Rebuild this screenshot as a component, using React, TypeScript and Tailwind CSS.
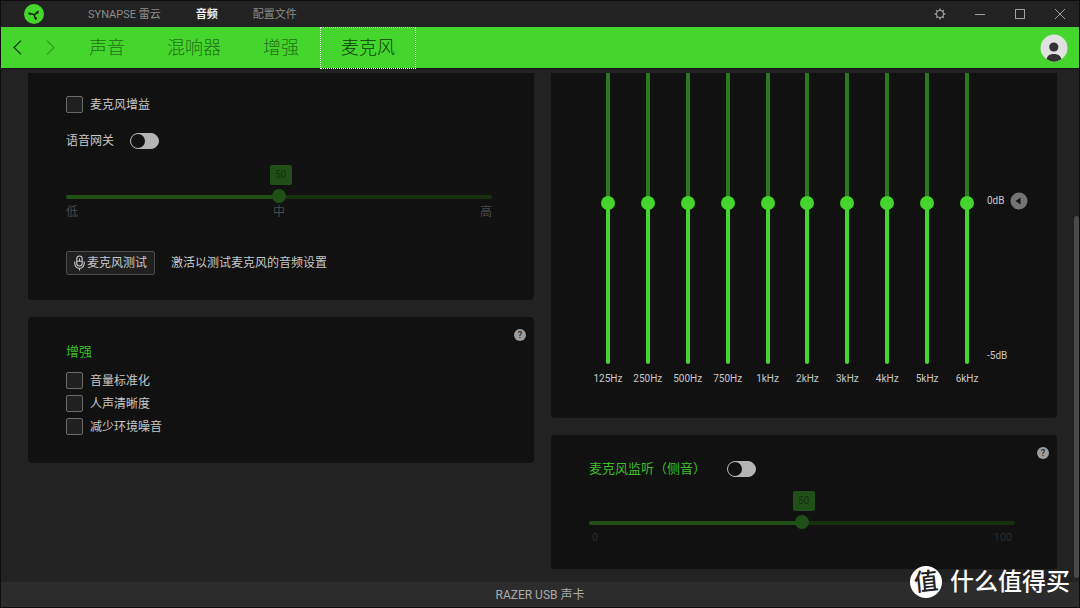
import { useId, useState } from "react";
import type { CSSProperties, ReactNode } from "react";

const BANDS = ["125Hz", "250Hz", "500Hz", "750Hz", "1kHz", "2kHz", "3kHz", "4kHz", "5kHz", "6kHz"];

function Logo() {
  return (
    <svg viewBox="0 0 20 20" className="size-5" aria-label="Razer" role="img">
      <circle cx="10" cy="10" r="10" fill="#44d62c" />
      <g stroke="#10220c" fill="#10220c" strokeLinecap="round">
        <path d="M5.6 9.6 Q8 9.6 10.4 11 Q11.4 9.4 13.6 8.2 M10.4 11 Q10.6 13.4 11.6 14.8" strokeWidth="1.5" fill="none" />
        <path d="M4.6 9 L7 9.2 L6.8 10.6 L5.6 10.6 Z M12.6 8 L14.4 6.8 L14.2 9.2 L13 9.5 Z M10.8 13.6 L12.2 13.2 L12.6 14.8 L12 15.6 Z" strokeWidth="0.5" />
      </g>
    </svg>
  );
}

function GearIcon() {
  return (
    <svg viewBox="0 0 12 12" className="size-3" fill="none" stroke="currentColor">
      <circle cx="6" cy="6" r="3.5" strokeWidth="1.1" />
      <path
        d="M6 0.6V2.4M6 9.6V11.4M0.6 6H2.4M9.6 6H11.4M2.2 2.2L3.4 3.4M8.6 8.6L9.8 9.8M9.8 2.2L8.6 3.4M3.4 8.6L2.2 9.8"
        strokeWidth="1.5"
      />
    </svg>
  );
}

function MicIcon() {
  return (
    <svg viewBox="0 0 11 16" className="h-4 w-[11px]" fill="none" stroke="currentColor" strokeWidth="1.1">
      <rect x="2.8" y="1" width="5.4" height="10" rx="2.7" />
      <path d="M2.8 6.3H8.2M5.5 3.5V6.3M0.8 6.5V8.6a4.7 4.7 0 0 0 9.4 0V6.5M5.5 13.2V15.6" />
    </svg>
  );
}

function Help({ label }: { label: string }) {
  return (
    <button
      type="button"
      aria-label={label}
      className="absolute top-3 right-2 flex size-3 items-center justify-center rounded-full bg-[#9c9c9c] text-[9px] leading-3 font-medium text-[#222]"
    >
      ?
    </button>
  );
}

function Check({ label }: { label: string }) {
  return (
    <label className="flex h-[17px] items-center gap-[7px]">
      <input
        type="checkbox"
        className="size-[17px] appearance-none rounded-[2px] border border-[#6a6a6a] bg-[#202020] checked:bg-[#44d62c]"
      />
      {label}
    </label>
  );
}

function Toggle({ id }: { id: string }) {
  return (
    <input
      id={id}
      type="checkbox"
      role="switch"
      className="flex h-4 w-[29px] appearance-none items-center rounded-full border border-[#b4b4b4] bg-[#b4b4b4] before:size-[14px] before:rounded-full before:bg-[#111] checked:justify-end checked:bg-[#44d62c]"
    />
  );
}

function LevelSlider({ label }: { label: string }) {
  const [value, setValue] = useState(50);
  const vars = { "--fill": `${value}%` } as CSSProperties;
  return (
    <div className="flex flex-col items-center gap-[5px]">
      <output className="ml-[3px] flex h-5 w-[22px] items-center justify-center rounded-[2px] bg-[#205018] text-[10px] text-[#123009]">
        {value}
      </output>
      <input
        type="range"
        aria-label={label}
        value={value}
        onChange={(e) => setValue(Number(e.target.value))}
        style={vars}
        className="block h-[14px] w-full appearance-none bg-transparent [&::-webkit-slider-runnable-track]:h-1 [&::-webkit-slider-runnable-track]:rounded-full [&::-webkit-slider-runnable-track]:bg-[linear-gradient(to_right,#205018_var(--fill),#183012_var(--fill))] [&::-webkit-slider-thumb]:mt-[-6px] [&::-webkit-slider-thumb]:size-[14px] [&::-webkit-slider-thumb]:appearance-none [&::-webkit-slider-thumb]:rounded-full [&::-webkit-slider-thumb]:bg-[#205018]"
      />
    </div>
  );
}

function Band({ name }: { name: string }) {
  const [value, setValue] = useState(50);
  const id = useId();
  const vars = { "--fill": `${value}%` } as CSSProperties;
  return (
    <div className="flex flex-col items-center">
      <div className="flex h-[291px] flex-col justify-end overflow-hidden">
        <input
          id={id}
          type="range"
          value={value}
          onChange={(e) => setValue(Number(e.target.value))}
          style={vars}
          className="block h-[322px] w-[14px] shrink-0 appearance-none bg-transparent [direction:rtl] [writing-mode:vertical-lr] [&::-webkit-slider-runnable-track]:w-1 [&::-webkit-slider-runnable-track]:rounded-full [&::-webkit-slider-runnable-track]:bg-[linear-gradient(to_top,#44d62c_var(--fill),#2a7a1d_var(--fill))] [&::-webkit-slider-thumb]:ml-[-5px] [&::-webkit-slider-thumb]:size-[14px] [&::-webkit-slider-thumb]:appearance-none [&::-webkit-slider-thumb]:rounded-full [&::-webkit-slider-thumb]:bg-[#44d62c]"
        />
      </div>
      <label htmlFor={id} className="pt-2 text-[10px] leading-[14px]">
        {name}
      </label>
    </div>
  );
}

function Card({ children, className }: { children: ReactNode; className: string }) {
  return <section className={`relative bg-[#111] ${className}`}>{children}</section>;
}

function TitleBar() {
  return (
    <header className="flex h-[26px] items-center justify-between pr-[13px] pl-[23px] text-[#8c8c8c]">
      <div className="flex items-center">
        <Logo />
        <nav className="ml-11 flex gap-[35px] pt-px text-[11px] leading-4">
          <a href="#synapse">SYNAPSE 雷云</a>
          <a href="#audio" className="font-bold text-[#eee]">音频</a>
          <a href="#profiles">配置文件</a>
        </nav>
      </div>
      <div className="flex items-center gap-7 text-[#a0a0a0]">
        <button type="button" aria-label="设置"><GearIcon /></button>
        <button type="button" aria-label="最小化">
          <svg viewBox="0 0 12 12" className="size-3" stroke="currentColor"><path d="M1 6.5H11" /></svg>
        </button>
        <button type="button" aria-label="最大化">
          <svg viewBox="0 0 12 12" className="size-3" fill="none" stroke="currentColor"><rect x="1.5" y="1.5" width="9" height="9" /></svg>
        </button>
        <button type="button" aria-label="关闭">
          <svg viewBox="0 0 12 12" className="size-3" stroke="currentColor"><path d="M1 1L11 11M11 1L1 11" /></svg>
        </button>
      </div>
    </header>
  );
}

function TabBar() {
  return (
    <div className="flex h-[41px] items-center justify-between bg-[#44d62c] pr-[11px] pl-3">
      <div className="flex items-center">
        <div className="flex gap-6 pr-[13px]">
          <button type="button" aria-label="后退" className="text-[#163f0f]">
            <svg viewBox="0 0 9 15" className="h-[15px] w-[9px]" fill="none" stroke="currentColor" strokeWidth="1.2"><path d="M8 0.8L1 7.5L8 14.2" /></svg>
          </button>
          <button type="button" aria-label="前进" className="text-[#339e22]">
            <svg viewBox="0 0 9 15" className="h-[15px] w-[9px]" fill="none" stroke="currentColor" strokeWidth="1.2"><path d="M1 0.8L8 7.5L1 14.2" /></svg>
          </button>
        </div>
        <nav className="flex items-center text-[18px] font-light text-[#256f19]">
          <a href="#sound" className="px-[21px]">声音</a>
          <a href="#mixer" className="px-[21px]">混响器</a>
          <a href="#enhancement" className="px-[21px]">增强</a>
          <a href="#mic" aria-current="page" className="relative -mb-px flex h-[42px] items-center border border-dotted border-white px-5 text-[#123a0b]">
            麦克风
          </a>
        </nav>
      </div>
      <button type="button" aria-label="账户">
        <svg viewBox="0 0 28 28" className="size-7">
          <circle cx="14" cy="14" r="13.5" fill="#e0e0e0" />
          <circle cx="13.8" cy="13" r="4.6" fill="#333" />
          <path d="M6.6 25.3 C7 21.8 10 20 13.8 20 C17.6 20 20.8 21.8 21.4 25.3 A13.5 13.5 0 0 1 6.6 25.3Z" fill="#333" />
        </svg>
      </button>
    </div>
  );
}

export default function App() {
  return (
    <div className="relative flex min-h-screen flex-col border border-[#0d0d0d] bg-[#222] font-['Roboto','Noto_Sans_CJK_SC',sans-serif] text-[12px] leading-4 text-[#c8c8c8]">
      <TitleBar />
      <TabBar />
      <div className="flex flex-1 border-t border-[#161616]">
        <main className="grid flex-1 grid-cols-2 items-start gap-[17px] pt-1 pr-[17px] pb-3 pl-[27px]">
          <div className="flex flex-col gap-[17px]">
            <Card className="rounded-b-[4px] px-[38px] pt-[23px] pb-[25px]">
              <Check label="麦克风增益" />
              <div className="mt-5 mb-4 flex items-center gap-4">
                <label htmlFor="gate">语音网关</label>
                <Toggle id="gate" />
              </div>
              <div className="pr-1">
                <LevelSlider label="语音网关级别" />
                <div className="flex justify-between text-[#4a4a4a]">
                  <span>低</span>
                  <span>中</span>
                  <span>高</span>
                </div>
              </div>
              <div className="mt-[31px] flex items-center gap-4">
                <button type="button" className="flex h-6 items-center gap-[2px] rounded-[2px] border border-[#4c4c4c] bg-[#202020] px-[7px]">
                  <MicIcon />
                  麦克风测试
                </button>
                <span>激活以测试麦克风的音频设置</span>
              </div>
            </Card>
            <Card className="rounded-[4px] px-[38px] pt-[27px] pb-7">
              <Help label="增强帮助" />
              <h2 className="text-[13px] text-[#3cbf27]">增强</h2>
              <div className="mt-3 flex flex-col gap-[6px]">
                <Check label="音量标准化" />
                <Check label="人声清晰度" />
                <Check label="减少环境噪音" />
              </div>
            </Card>
          </div>
          <div className="flex flex-col gap-[17px]">
            <Card className="flex rounded-b-[4px] pb-8 pl-[37px]">
              <div className="grid flex-1 grid-cols-10">
                {BANDS.map((name) => (
                  <Band key={name} name={name} />
                ))}
              </div>
              <div className="flex h-[291px] w-[70px] flex-col justify-between pt-[119px] pb-px text-[10px] leading-[14px]">
                <div className="flex items-center gap-[5px]">
                  0dB
                  <button type="button" aria-label="重置为 0dB">
                    <svg viewBox="0 0 18 18" className="size-[18px]">
                      <circle cx="9" cy="9" r="8.5" fill="#747474" />
                      <path d="M5.5 9L10.5 5.4V12.6Z" fill="#151515" />
                    </svg>
                  </button>
                </div>
                <span>-5dB</span>
              </div>
            </Card>
            <Card className="rounded-[4px] px-[38px] pt-[26px] pb-6">
              <Help label="监听帮助" />
              <div className="mb-[14px] flex items-center gap-[21px]">
                <label htmlFor="monitor" className="text-[13px] text-[#3cbf27]">麦克风监听（侧音）</label>
                <Toggle id="monitor" />
              </div>
              <div className="-mb-px pr-1">
                <LevelSlider label="监听音量" />
                <div className="flex justify-between px-[3px] text-[11px] text-[#2c2c2c]">
                  <span>0</span>
                  <span>100</span>
                </div>
              </div>
            </Card>
          </div>
        </main>
        <div className="flex w-[5px] flex-col pt-[147px] pb-1">
          <div className="flex-1 rounded-full bg-[#4b4b4b]" />
        </div>
      </div>
      <footer className="flex h-[25px] items-center justify-center bg-[#2c2c2c] text-[#aaa]">RAZER USB 声卡</footer>
      <div className="absolute right-[9px] bottom-[9px] flex items-center gap-2 text-[24px] leading-8 font-medium text-white">
        <span className="flex size-8 items-center justify-center rounded-full bg-white text-[#222]">
          <span className="-rotate-6">值</span>
        </span>
        什么值得买
      </div>
    </div>
  );
}
